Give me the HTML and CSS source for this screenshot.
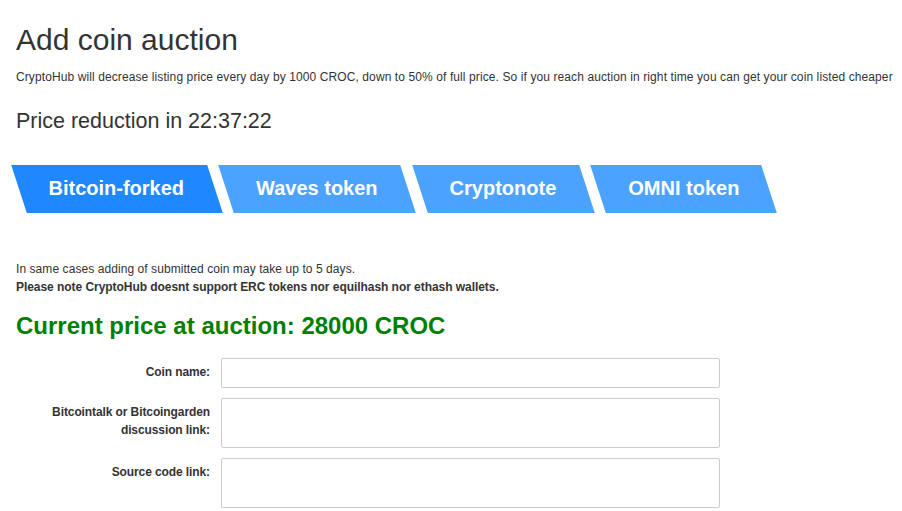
FILE: index.html
```html
<!DOCTYPE html>
<html lang="en">
<head>
  <meta charset="UTF-8" />
  <title>Add coin auction</title>
  <link rel="stylesheet" href="styles.css">
</head>
<body>
  <div class="container">
    <h1>Add coin auction</h1>
    <p class="lead-note">CryptoHub will decrease listing price every day by 1000 CROC, down to 50% of full price. So if you reach auction in right time you can get your coin listed cheaper</p>

    <h3 class="countdown">Price reduction in <span id="timer">22:37:22</span></h3>

    <div class="tabs">
      <a class="tab active" href="#">Bitcoin-forked</a>
      <a class="tab" href="#">Waves token</a>
      <a class="tab" href="#">Cryptonote</a>
      <a class="tab" href="#">OMNI token</a>
    </div>

    <p class="info">
      In same cases adding of submitted coin may take up to 5 days.<br/>
      <strong>Please note CryptoHub doesnt support ERC tokens nor equilhash nor ethash wallets.</strong>
    </p>

    <h2 class="price">Current price at auction: 28000 CROC</h2>

    <form class="coin-form">
      <label for="coinName">Coin name:</label>
      <input type="text" id="coinName" />

      <label for="discussion">Bitcointalk or Bitcoingarden discussion link:</label>
      <textarea id="discussion"></textarea>

      <label for="source">Source code link:</label>
      <textarea id="source"></textarea>
    </form>
  </div>
</body>
</html>
```

FILE: styles.css
```css
body {
  margin: 0;
  font-family: "Liberation Sans", Arial, sans-serif;
  font-size: 12px;
  line-height: 18px;
  color: #333;
  background: #fff;
}
.container {
  padding: 0 16px;
}
h1 {
  font-size: 30px;
  font-weight: normal;
  line-height: 1.1;
  margin: 23px 0 0;
}
.lead-note {
  margin: 12px 0 0;
  white-space: nowrap;
  letter-spacing: 0.1px;
}
.countdown {
  font-size: 21.5px;
  font-weight: normal;
  line-height: 1.1;
  margin: 24px 0 0;
}
.tabs {
  display: flex;
  gap: 12px;
  margin: 31px 0 0 2.5px;
}
.tab {
  position: relative;
  display: block;
  height: 48px;
  line-height: 47px;
  padding: 0 30px;
  font-size: 20px;
  font-weight: bold;
  color: #fff;
  text-decoration: none;
  z-index: 0;
}
.tab::before {
  content: "";
  position: absolute;
  inset: 0;
  background: #4ca2ff;
  transform: skewX(18deg);
  z-index: -1;
}
.tab.active::before {
  background: #1f88fe;
}
.info {
  margin: 47px 0 0;
  letter-spacing: 0.07px;
}
.info strong {
  letter-spacing: -0.05px;
}
.price {
  font-size: 24px;
  font-weight: bold;
  line-height: 1.1;
  color: #008000;
  margin: 17px 0 0;
}
.coin-form {
  display: grid;
  grid-template-columns: 194px 499px;
  column-gap: 11px;
  row-gap: 10px;
  margin-top: 19px;
}
.coin-form label {
  text-align: right;
  font-weight: bold;
  letter-spacing: -0.1px;
  padding-top: 5px;
}
.coin-form input,
.coin-form textarea {
  box-sizing: border-box;
  margin: 0;
  border: 1px solid #ccc;
  border-radius: 2px;
  font-family: inherit;
  font-size: 12px;
  padding: 5px 8px;
}
.coin-form input {
  height: 30px;
}
.coin-form textarea {
  height: 50px;
  resize: none;
}
```
